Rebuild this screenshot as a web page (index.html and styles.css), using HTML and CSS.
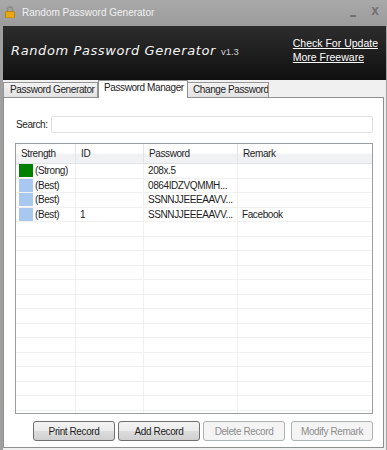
FILE: index.html
```html
<!DOCTYPE html>
<html>
<head>
<meta charset="utf-8">
<link rel="stylesheet" href="styles.css">
</head>
<body>
<div class="window">
  <div class="titlebar">
    <svg class="lock" width="10" height="12" viewBox="0 0 10 12">
      <path d="M2.5 6 V3.5 a2.5 2.5 0 0 1 5 0 V6" fill="none" stroke="#8a8a8a" stroke-width="1.4"/>
      <rect x="0.5" y="5.5" width="9" height="6.5" rx="1" fill="#e6a814" stroke="#b07a00" stroke-width="0.8"/>
    </svg>
    <span class="title">Random Password Generator</span>
    <span class="controls"><span class="min"></span><span class="close">X</span></span>
  </div>
  <div class="client">
    <div class="header">
      <div class="brand"><span class="brand-name">Random Password Generator</span><span class="ver">v1.3</span></div>
      <div class="links"><a href="#">Check For Update</a><a href="#">More Freeware</a></div>
    </div>
    <div class="tabs">
      <div class="tab tab-gen">Password Generator</div>
      <div class="tab tab-man active">Password Manager</div>
      <div class="tab tab-chg">Change Password</div>
    </div>
    <div class="panel">
      <div class="search"><span class="label">Search:</span><div class="input"></div></div>
      <div class="list">
        <div class="row head"><div>Strength</div><div>ID</div><div>Password</div><div>Remark</div></div>
        <div class="row"><div class="str"><span class="sw strong"></span>(Strong)</div><div></div><div>208x.5</div><div></div></div>
        <div class="row"><div class="str"><span class="sw best"></span>(Best)</div><div></div><div>0864IDZVQMMH...</div><div></div></div>
        <div class="row"><div class="str"><span class="sw best"></span>(Best)</div><div></div><div>SSNNJJEEEAAVV...</div><div></div></div>
        <div class="row"><div class="str"><span class="sw best"></span>(Best)</div><div>1</div><div>SSNNJJEEEAAVV...</div><div>Facebook</div></div>
        <div class="row"><div></div><div></div><div></div><div></div></div>
        <div class="row"><div></div><div></div><div></div><div></div></div>
        <div class="row"><div></div><div></div><div></div><div></div></div>
        <div class="row"><div></div><div></div><div></div><div></div></div>
        <div class="row"><div></div><div></div><div></div><div></div></div>
        <div class="row"><div></div><div></div><div></div><div></div></div>
        <div class="row"><div></div><div></div><div></div><div></div></div>
        <div class="row"><div></div><div></div><div></div><div></div></div>
        <div class="row"><div></div><div></div><div></div><div></div></div>
        <div class="row"><div></div><div></div><div></div><div></div></div>
        <div class="row"><div></div><div></div><div></div><div></div></div>
        <div class="row"><div></div><div></div><div></div><div></div></div>
        <div class="row"><div></div><div></div><div></div><div></div></div>
        <div class="row"><div></div><div></div><div></div><div></div></div>
      </div>
      <div class="buttons">
        <button class="btn">Print Record</button>
        <button class="btn">Add Record</button>
        <button class="btn disabled">Delete Record</button>
        <button class="btn disabled last">Modify Remark</button>
      </div>
    </div>
  </div>
</div>
</body>
</html>
```
FILE: styles.css
```css
* { box-sizing: border-box; }
html, body { margin: 0; padding: 0; }
body {
  width: 387px;
  height: 450px;
  overflow: hidden;
  background: #9f9f9f;
  font-family: "Liberation Sans", Arial, sans-serif;
}
.window {
  width: 387px;
  height: 450px;
  display: flex;
  flex-direction: column;
  background: #9f9f9f;
}
.titlebar {
  height: 26px;
  display: flex;
  align-items: center;
  padding-left: 5px;
  background: linear-gradient(#a9a9a9, #9c9c9c);
}
.lock { margin-top: -2px; }
.title {
  margin-left: 7px;
  font-size: 10px;
  color: #f0f0f0;
  margin-top: -1px;
}
.controls {
  margin-left: auto;
  display: flex;
  align-items: center;
  margin-right: 8px;
}
.min {
  width: 6px;
  height: 2px;
  background: #727272;
  margin-top: 5px;
  margin-right: 15px;
}
.close {
  font-family: "DejaVu Sans", sans-serif;
  font-size: 10px;
  font-weight: bold;
  color: #727272;
  margin-top: -3px;
}
.client {
  margin: 0 1px 0 3px;
  flex: 1;
  display: flex;
  flex-direction: column;
  background: #f0f0f0;
}
.header {
  height: 54px;
  background: linear-gradient(#2d2d2d, #101010);
  display: flex;
  align-items: flex-start;
  padding-left: 8px;
}
.brand {
  margin-top: 17px;
  display: flex;
  align-items: baseline;
}
.brand-name {
  font-family: "DejaVu Sans", sans-serif;
  font-style: italic;
  font-size: 13px;
  letter-spacing: 0.6px;
  color: #f4f4f4;
}
.ver {
  font-size: 9.5px;
  color: #d0d0d0;
  margin-left: 5px;
}
.links {
  margin-left: auto;
  margin-right: 8px;
  margin-top: 11px;
  display: flex;
  flex-direction: column;
  gap: 2px;
}
.links a {
  color: #ffffff;
  font-size: 10.5px;
  line-height: 12px;
  text-decoration: underline;
}
.tabs {
  height: 17px;
  display: flex;
  align-items: flex-end;
  font-size: 10px;
  letter-spacing: -0.4px;
}
.tab {
  height: 15px;
  border: 1px solid #979797;
  border-bottom: none;
  background: linear-gradient(#f2f2f2, #e3e3e3);
  color: #1e1e1e;
  padding-left: 6px;
  line-height: 14px;
  white-space: nowrap;
  overflow: hidden;
}
.tab-gen { width: 95px; }
.tab-man { width: 90px; }
.tab-chg { width: 81px; border-left: none; padding-left: 5px; }
.tab.active {
  height: 18px;
  background: #ffffff;
  border-color: #8e8f8f;
  padding-left: 5px;
  line-height: 14px;
  margin-bottom: -1px;
  position: relative;
  z-index: 1;
}
.panel {
  margin-right: 2px;
  height: 351px;
  border: 1px solid #8e8f8f;
  background: #ffffff;
  padding: 18px 10px 0 11px;
  display: flex;
  flex-direction: column;
  font-size: 10px;
  letter-spacing: -0.4px;
  color: #1e1e1e;
}
.search {
  display: flex;
  align-items: center;
  height: 17px;
}
.label {
  margin-left: 1px;
  width: 35px;
}
.input {
  flex: 1;
  height: 17px;
  border: 1px solid #dcdfe3;
  border-radius: 2px;
  background: #fff;
}
.list {
  margin-top: 10px;
  height: 271px;
  border: 1px solid #9a9ea5;
  overflow: hidden;
}
.row {
  display: grid;
  grid-template-columns: 60px 68px 94px 1fr;
  height: 14.5px;
  border-bottom: 1px solid #f0f0f0;
}
.row > div {
  border-right: 1px solid #f0f0f0;
  padding-left: 4px;
  line-height: 13px;
  white-space: nowrap;
  overflow: hidden;
}
.row > div:last-child { border-right: none; }
.row.head {
  height: 20px;
  background: linear-gradient(#ffffff 0%, #ffffff 45%, #f1f2f4 55%, #f1f2f4 100%);
  border-bottom: 1px solid #e2e3e5;
}
.row.head > div {
  line-height: 19px;
  padding-left: 5px;
  border-right-color: #e3e4e6;
}
.row > div.str {
  padding-left: 3px;
  display: flex;
  align-items: center;
}
.sw {
  width: 14px;
  height: 13px;
  margin-right: 2px;
  flex: none;
}
.sw.strong { background: #008000; }
.sw.best { background: #a9c8ef; }
.buttons {
  margin-top: 7px;
  display: flex;
  justify-content: flex-end;
  gap: 3px;
}
.btn {
  width: 82px;
  height: 20px;
  padding: 0;
  border: 1px solid #707070;
  border-radius: 3px;
  background: linear-gradient(#f3f3f3 0%, #ebebeb 50%, #dddddd 51%, #cfcfcf 100%);
  font-family: "Liberation Sans", Arial, sans-serif;
  font-size: 10px;
  letter-spacing: -0.4px;
  color: #1e1e1e;
}
.btn.disabled {
  border-color: #adb2b5;
  background: #f4f4f4;
  color: #8d8d8d;
}
.btn.last { margin-left: 3px; }
```
